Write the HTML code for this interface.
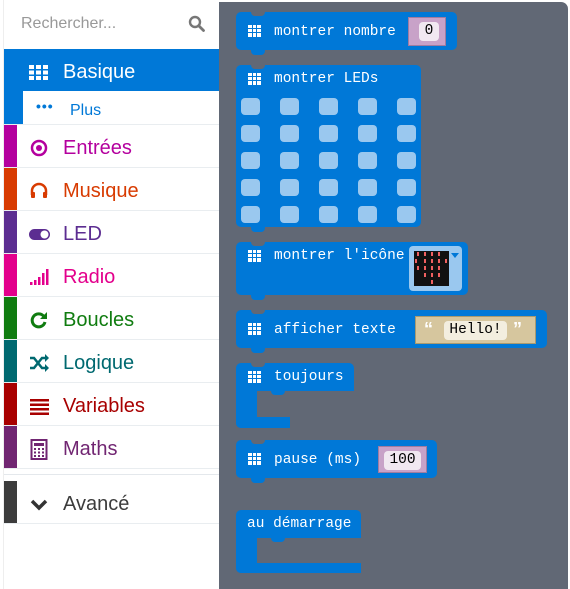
<!DOCTYPE html>
<html><head><meta charset="utf-8"><style>
*{margin:0;padding:0;box-sizing:border-box}
body{width:570px;height:589px;background:#fff;position:relative;overflow:hidden;font-family:"Liberation Sans",sans-serif}
.side{position:absolute;left:3px;top:0;width:216px;height:589px;background:#fff;border-left:1px solid #eee}
.search{position:absolute;left:0;top:0;width:216px;height:49px}
.search span{position:absolute;left:17px;top:15px;font-size:16px;color:#999}
.row{position:absolute;left:0;width:216px;height:43px;border-bottom:1px solid #e9edf0;font-size:20px}
.row .strip{position:absolute;left:0;top:0;width:13px;height:100%}
.row .lbl{position:absolute;left:59px;top:12px}
.row .ic{position:absolute;left:24px;top:12px;width:22px;height:22px}
.ws{position:absolute;left:219px;top:2px;width:349px;height:587px;background:#616875;border-top-right-radius:7px}
.b{position:absolute;background:#0078d7;border-radius:5px}
.b .t{position:absolute;color:#fff;font-family:"Liberation Mono",monospace;font-size:14.5px;white-space:pre}
.notch{position:absolute;width:14px;height:5px;background:#616875;border-radius:0 0 4px 4px;left:15px;top:-1px}
.bump{position:absolute;width:14px;height:5px;background:#0078d7;border-radius:0 0 4px 4px;left:15px}
.g{position:absolute;left:12px;width:13px;height:12px;background:
linear-gradient(#0078d7,#0078d7) 0 3px/100% 1px no-repeat,
linear-gradient(#0078d7,#0078d7) 0 7px/100% 1px no-repeat,
linear-gradient(90deg,#0078d7,#0078d7) 4px 0/1px 100% no-repeat,
linear-gradient(90deg,#0078d7,#0078d7) 8px 0/1px 100% no-repeat,#fff}
.led{position:absolute;width:19px;height:17px;background:#9ac8ef;border-radius:4px}
.slot{position:absolute;border:1px solid #a07ca0;background:#c8a2c8}
.in{position:absolute;background:#f1e8f1;border-radius:4px;color:#000;font-family:"Liberation Mono",monospace;font-size:14.5px;text-align:center}
</style></head><body>
<div class="side">
<div class="search"><span>Rechercher...</span>
<svg style="position:absolute;left:184px;top:15px" width="17" height="17" viewBox="0 0 17 17"><circle cx="7" cy="7" r="5" fill="none" stroke="#777" stroke-width="2.4"/><path d="M11 11l4.5 4.5" stroke="#777" stroke-width="2.8" stroke-linecap="round"/></svg></div>
<div class="row" style="top:49px;background:#0078d7;color:#fff;height:42px;border:none"><svg class="ic" viewBox="0 0 22 22"><g fill="#fff"><rect x="1" y="4" width="5" height="4"/><rect x="8" y="4" width="5" height="4"/><rect x="15" y="4" width="5" height="4"/><rect x="1" y="9.5" width="5" height="4"/><rect x="8" y="9.5" width="5" height="4"/><rect x="15" y="9.5" width="5" height="4"/><rect x="1" y="15" width="5" height="4"/><rect x="8" y="15" width="5" height="4"/><rect x="15" y="15" width="5" height="4"/></g></svg><span class="lbl">Basique</span></div>
<div class="row" style="top:91px;height:34px;color:#0078d7;font-size:16px"><div class="strip" style="width:19px;background:#0078d7"></div><span style="position:absolute;left:32px;top:7px;font-size:14px;letter-spacing:1px;font-weight:bold">•••</span><span class="lbl" style="left:66px;top:11px">Plus</span></div>
<div class="row" style="top:125px;color:#b4009e"><div class="strip" style="background:#b4009e"></div><svg class="ic" viewBox="0 0 22 22"><circle cx="11" cy="11" r="7" fill="none" stroke="#b4009e" stroke-width="2.5"/><circle cx="11" cy="11" r="3" fill="#b4009e"/></svg><span class="lbl">Entrées</span></div>
<div class="row" style="top:168px;color:#d83b01"><div class="strip" style="background:#d83b01"></div><svg class="ic" viewBox="0 0 22 22"><path d="M4 15v-4a7 7 0 0 1 14 0v4" fill="none" stroke="#d83b01" stroke-width="2.5"/><rect x="3" y="12" width="4" height="6" rx="1" fill="#d83b01"/><rect x="15" y="12" width="4" height="6" rx="1" fill="#d83b01"/></svg><span class="lbl">Musique</span></div>
<div class="row" style="top:211px;color:#5c2d91"><div class="strip" style="background:#5c2d91"></div><svg class="ic" viewBox="0 0 22 22"><rect x="1" y="6" width="21" height="11" rx="5.5" fill="#5c2d91"/><circle cx="16.5" cy="11.5" r="4" fill="#fff"/></svg><span class="lbl">LED</span></div>
<div class="row" style="top:254px;color:#e3008c"><div class="strip" style="background:#e3008c"></div><svg class="ic" viewBox="0 0 22 22"><g fill="#e3008c"><rect x="2" y="16" width="2.5" height="3"/><rect x="6" y="14" width="2.5" height="5"/><rect x="10" y="11" width="2.5" height="8"/><rect x="14" y="7" width="2.5" height="12"/><rect x="18" y="3" width="2.5" height="16"/></g></svg><span class="lbl">Radio</span></div>
<div class="row" style="top:297px;color:#107c10"><div class="strip" style="background:#107c10"></div><svg class="ic" viewBox="0 0 22 22"><path d="M17 13a6.5 6.5 0 1 1-1.5-6" fill="none" stroke="#107c10" stroke-width="3"/><path d="M19 3v7h-7z" fill="#107c10"/></svg><span class="lbl">Boucles</span></div>
<div class="row" style="top:340px;color:#006970"><div class="strip" style="background:#006970"></div><svg class="ic" viewBox="0 0 22 22"><path d="M2 6h4l8 10h4M2 16h4l8-10h4" fill="none" stroke="#006970" stroke-width="2.5"/><path d="M17 2l4 4-4 4zM17 12l4 4-4 4z" fill="#006970"/></svg><span class="lbl">Logique</span></div>
<div class="row" style="top:383px;color:#a80000"><div class="strip" style="background:#a80000"></div><svg class="ic" viewBox="0 0 22 22"><g fill="#a80000"><rect x="2" y="4" width="19" height="2.5"/><rect x="2" y="8.5" width="19" height="2.5"/><rect x="2" y="13" width="19" height="2.5"/><rect x="2" y="17.5" width="19" height="2.5"/></g></svg><span class="lbl">Variables</span></div>
<div class="row" style="top:426px;color:#712672"><div class="strip" style="background:#712672"></div><svg class="ic" viewBox="0 0 22 22"><rect x="3.5" y="2" width="15" height="19" fill="none" stroke="#712672" stroke-width="2"/><rect x="6" y="5" width="10" height="3" fill="#712672"/><g fill="#712672"><rect x="6" y="10" width="2" height="2"/><rect x="10" y="10" width="2" height="2"/><rect x="14" y="10" width="2" height="2"/><rect x="6" y="13.5" width="2" height="2"/><rect x="10" y="13.5" width="2" height="2"/><rect x="14" y="13.5" width="2" height="2"/><rect x="6" y="17" width="2" height="2"/><rect x="10" y="17" width="2" height="2"/><rect x="14" y="17" width="2" height="2"/></g></svg><span class="lbl">Maths</span></div>
<div style="position:absolute;left:0;top:474px;width:216px;height:1px;background:#e4e8ec"></div>
<div class="row" style="top:481px;color:#3c3c3c"><div class="strip" style="background:#3c3c3c"></div><svg class="ic" viewBox="0 0 22 22"><path d="M4 8l7 7 7-7" fill="none" stroke="#333" stroke-width="3.5"/></svg><span class="lbl">Avancé</span></div>
</div>
<div class="ws"></div>

<div class="b" style="left:236px;top:12px;width:221px;height:38px"><div class="notch"></div><div class="bump" style="top:38px"></div><div class="g" style="top:13px"></div><span class="t" style="left:38px;top:12px">montrer nombre</span>
<div class="slot" style="left:172px;top:5px;width:38px;height:29px"><div class="in" style="left:10px;top:4px;width:20px;height:19px;line-height:19px">0</div></div></div>

<div class="b" style="left:236px;top:65px;width:185px;height:162px"><div class="notch"></div><div class="bump" style="top:162px"></div><div class="g" style="top:8px"></div><span class="t" style="left:38px;top:6px">montrer LEDs</span></div>
<div class="led" style="left:241px;top:98px"></div><div class="led" style="left:280px;top:98px"></div><div class="led" style="left:319px;top:98px"></div><div class="led" style="left:358px;top:98px"></div><div class="led" style="left:397px;top:98px"></div>
<div class="led" style="left:241px;top:125px"></div><div class="led" style="left:280px;top:125px"></div><div class="led" style="left:319px;top:125px"></div><div class="led" style="left:358px;top:125px"></div><div class="led" style="left:397px;top:125px"></div>
<div class="led" style="left:241px;top:152px"></div><div class="led" style="left:280px;top:152px"></div><div class="led" style="left:319px;top:152px"></div><div class="led" style="left:358px;top:152px"></div><div class="led" style="left:397px;top:152px"></div>
<div class="led" style="left:241px;top:179px"></div><div class="led" style="left:280px;top:179px"></div><div class="led" style="left:319px;top:179px"></div><div class="led" style="left:358px;top:179px"></div><div class="led" style="left:397px;top:179px"></div>
<div class="led" style="left:241px;top:206px"></div><div class="led" style="left:280px;top:206px"></div><div class="led" style="left:319px;top:206px"></div><div class="led" style="left:358px;top:206px"></div><div class="led" style="left:397px;top:206px"></div>

<div class="b" style="left:236px;top:242px;width:232px;height:53px"><div class="notch"></div><div class="bump" style="top:53px"></div><div class="g" style="top:8px"></div><span class="t" style="left:38px;top:6px">montrer l'icône</span>
<div style="position:absolute;left:173px;top:4px;width:53px;height:45px;background:#9ac8ef;border-radius:4px">
<svg style="position:absolute;left:5px;top:5px" width="35" height="35" viewBox="0 0 35 35"><rect width="35" height="35" fill="#111"/><g fill="#f06060"><rect x="3" y="1" width="2" height="4"/><rect x="10" y="1" width="2" height="4"/><rect x="17" y="1" width="2" height="4"/><rect x="24" y="1" width="2" height="4"/><rect x="1" y="8" width="2" height="4"/><rect x="10" y="8" width="2" height="4"/><rect x="17" y="8" width="2" height="4"/><rect x="24" y="8" width="2" height="4"/><rect x="31" y="8" width="2" height="4"/><rect x="3" y="15" width="2" height="4"/><rect x="10" y="15" width="2" height="4"/><rect x="17" y="15" width="2" height="4"/><rect x="24" y="15" width="2" height="4"/><rect x="10" y="22" width="2" height="4"/><rect x="17" y="22" width="2" height="4"/><rect x="24" y="22" width="2" height="4"/><rect x="17" y="29" width="2" height="4"/></g></svg>
<svg style="position:absolute;left:42px;top:7px" width="8" height="6"><path d="M0 0h8L4 5z" fill="#0078d7"/></svg></div></div>

<div class="b" style="left:236px;top:310px;width:311px;height:38px"><div class="notch"></div><div class="bump" style="top:38px"></div><div class="g" style="top:13px"></div><span class="t" style="left:38px;top:12px">afficher texte</span>
<div style="position:absolute;left:179px;top:6px;width:121px;height:28px;background:#d6c69e;border:1px solid #a89a70">
<span style="position:absolute;left:8px;top:2px;color:#fff;font-size:18px;font-weight:bold">“</span>
<div class="in" style="left:28px;top:4px;width:63px;height:19px;line-height:19px;background:#f3eedf">Hello!</div>
<span style="position:absolute;left:97px;top:2px;color:#fff;font-size:18px;font-weight:bold">”</span></div></div>

<div class="b" style="left:236px;top:363px;width:118px;height:28px;border-bottom-left-radius:0;border-bottom-right-radius:0"><div class="notch"></div><div class="g" style="top:8px"></div><span class="t" style="left:38px;top:6px">toujours</span></div>
<div style="position:absolute;left:236px;top:388px;width:21px;height:40px;background:#0078d7;border-radius:0 0 0 5px"></div>
<div style="position:absolute;left:236px;top:417px;width:54px;height:11px;background:#0078d7;border-radius:0 0 0 5px"></div>
<div style="position:absolute;left:257px;top:391px;width:20px;height:26px;background:#616875;border-radius:5px 0 0 5px"></div>
<div style="position:absolute;left:271px;top:391px;width:14px;height:4px;background:#0078d7;border-radius:0 0 4px 4px"></div>

<div class="b" style="left:236px;top:440px;width:201px;height:38px"><div class="notch"></div><div class="bump" style="top:38px"></div><div class="g" style="top:13px"></div><span class="t" style="left:38px;top:12px">pause (ms)</span>
<div class="slot" style="left:142px;top:6px;width:49px;height:27px"><div class="in" style="left:5px;top:4px;width:37px;height:19px;line-height:19px">100</div></div></div>

<div class="b" style="left:236px;top:510px;width:125px;height:28px;border-bottom-left-radius:0;border-bottom-right-radius:0"><span class="t" style="left:11px;top:6px">au démarrage</span></div>
<div style="position:absolute;left:236px;top:535px;width:21px;height:38px;background:#0078d7;border-radius:0 0 0 5px"></div>
<div style="position:absolute;left:236px;top:563px;width:125px;height:10px;background:#0078d7;border-radius:0 0 0 5px"></div>
<div style="position:absolute;left:257px;top:538px;width:20px;height:25px;background:#616875;border-radius:5px 0 0 5px"></div>
<div style="position:absolute;left:271px;top:538px;width:14px;height:4px;background:#0078d7;border-radius:0 0 4px 4px"></div>
</body></html>
